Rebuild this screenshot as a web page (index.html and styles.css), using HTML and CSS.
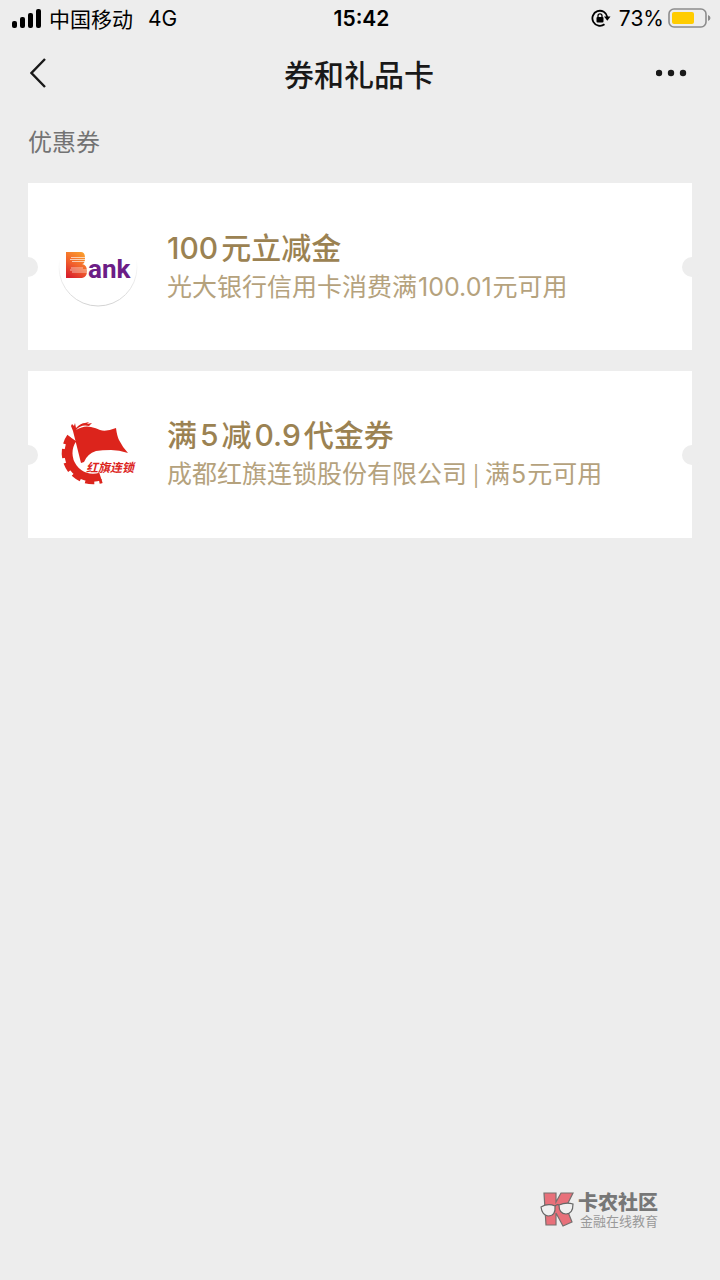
FILE: index.html
```
<!DOCTYPE html>
<html lang="zh-CN">
<head>
    <meta charset="UTF-8">
    <meta name="viewport" content="width=device-width, initial-scale=1.0">
    <title>券和礼品卡</title>
    <link rel="stylesheet" href="styles.css">
</head>
<body>

    <div class="status">
        <div class="status-left">
            <svg class="signal" width="30" height="20" viewBox="0 0 30 20">
                <rect x="0" y="13" width="5" height="7" rx="2"/>
                <rect x="8" y="9" width="5" height="11" rx="2"/>
                <rect x="16" y="5" width="5" height="15" rx="2"/>
                <rect x="24" y="1" width="5" height="19" rx="2"/>
            </svg>
            <span>中国移动</span>
            <span class="network">4G</span>
        </div>
        <div class="time">15:42</div>
        <div class="status-right">
            <svg width="20" height="20" viewBox="0 0 20 20">
                <path d="M13.5 16.2A7.5 7.5 0 1 1 16.3 9" fill="none" stroke="#000" stroke-width="1.8"/>
                <path d="M13 8.5h6.5L16.3 12.7z"/>
                <rect x="5.5" y="9" width="7" height="5.5" rx="1"/>
                <path d="M7 9.5V7.8a2 2 0 0 1 4 0v1.7" fill="none" stroke="#000" stroke-width="1.3"/>
            </svg>
            <span>73%</span>
            <svg width="43" height="20" viewBox="0 0 43 20">
                <rect x="1" y="1" width="37" height="18" rx="5" fill="none" stroke="#8c8c8c" stroke-width="1.6"/>
                <rect x="4" y="4" width="22" height="12" rx="2" fill="#fc0"/>
                <path d="M40 7q2.5 1 2.5 3T40 13z" fill="#8c8c8c"/>
            </svg>
        </div>
    </div>

    <header class="nav">
        <button class="nav-button" type="button" aria-label="返回">
            <svg width="18" height="30" viewBox="0 0 18 30">
                <path d="M15 1L1.5 15 15 29" fill="none" stroke="#191919" stroke-width="2.4"/>
            </svg>
        </button>
        <h1>券和礼品卡</h1>
        <button class="nav-button" type="button" aria-label="更多">
            <svg width="32" height="8" viewBox="0 0 32 8" fill="#191919">
                <circle cx="3" cy="4" r="3.2"/>
                <circle cx="15" cy="4" r="3.2"/>
                <circle cx="27" cy="4" r="3.2"/>
            </svg>
        </button>
    </header>

    <main>
        <h2>优惠券</h2>

        <a class="coupon" href="#">
            <svg class="logo" width="80" height="80" viewBox="0 0 80 80">
                <defs>
                    <linearGradient id="flame" x1="0.7" y1="0" x2="0.2" y2="1">
                        <stop offset="0" stop-color="#fa9b2c"/>
                        <stop offset="0.5" stop-color="#f2622c"/>
                        <stop offset="1" stop-color="#d8202c"/>
                    </linearGradient>
                    <linearGradient id="rim" x1="0" y1="0" x2="0" y2="1">
                        <stop offset="0.4" stop-color="#fff"/>
                        <stop offset="1" stop-color="#d2d2d2"/>
                    </linearGradient>
                </defs>
                <circle cx="40" cy="40" r="39" fill="#fff" stroke="url(#rim)"/>
                <path d="M8 25h15q4 0 4 6t-3 6q5 1 5 7t-5 7H8z" fill="url(#flame)"/>
                <path d="M13 30.5h15M12 32.5h15M14 34.5h13M13 41h12M12 43h17M14 45h15" stroke="#fff" stroke-width="0.9" opacity="0.7"/>
                <text class="bank" x="30" y="51">ank</text>
            </svg>
            <div class="info">
                <h3>100<span class="after-number">元立减金</span></h3>
                <p>光大银行信用卡消费满<span class="number">100.01</span>元可用</p>
            </div>
        </a>

        <a class="coupon" href="#">
            <svg class="logo" width="80" height="80" viewBox="0 0 80 80">
                <!-- gear: ring plus teeth -->
                <g fill="none" stroke="#dc241c">
                    <path d="M15 24A24.5 24.5 0 0 0 42.5 61.5" stroke-width="8"/>
                    <path d="M11 21A29.5 29.5 0 0 0 44 66" stroke-width="4" stroke-dasharray="9 5"/>
                </g>
                <g fill="#dc241c">
                    <path d="M14 9l2 2 1-3 1 5q5-5 9-5l4-1-2 2 5-1-3 3q-8-2-13 4 8-5 15-3 5 1 9 3 6 2 16-2 1 8 3 12 4 8 9 13-9-3-17-3-9 0-15 1-9 3-12 11l-3 1-8-32-2-5z"/>
                    <text class="hongqi" x="28" y="57">红旗连锁</text>
                </g>
            </svg>
            <div class="info">
                <h3>满<span class="number">5</span>减<span class="number">0.9</span>代金券</h3>
                <p>成都红旗连锁股份有限公司<span class="divider"> | </span>满<span class="number">5</span>元可用</p>
            </div>
        </a>
    </main>

    <footer class="community">
        <svg width="38" height="38" viewBox="0 0 38 38">
            <path d="M4 2h12v9l5-9h12l-7 14 6 15-9 4-7-13v12H6z" fill="#e8707a" stroke="#77706f" stroke-width="1.2"/>
            <g fill="#f0f0f0" stroke="#666" stroke-width="1.2">
                <path d="M1 16q7-4 14-1 1 10-7 10-6-1-7-9z"/>
                <path d="M19 14q7-3 14-1 0 10-7 10t-7-9z"/>
                <path d="M15 15q2-2 4-1" fill="none"/>
            </g>
        </svg>
        <div>
            <div class="community-name">卡农社区</div>
            <div class="community-slogan">金融在线教育</div>
        </div>
    </footer>

</body>
</html>
```

FILE: styles.css
```
* {
    box-sizing: border-box;
}

body {
    margin: 0;
    min-height: 100vh;
    display: flex;
    flex-direction: column;
    background-color: #ededed;
    color: #191919;
    font-family: Inter, "Noto Sans CJK SC", sans-serif;
}

h1, h2, h3, p {
    margin: 0;
}

.status {
    display: grid;
    grid-template-columns: 1fr auto 1fr;
    align-items: center;
    height: 36px;
    padding: 0 9px 0 12px;
    font-size: 21px;
    color: #000;
}

.status-left, .status-right {
    display: flex;
    align-items: center;
}

.status-left {
    gap: 7px;
}

.network {
    margin-left: 8px;
}

.status-right {
    justify-content: flex-end;
    gap: 8px;
}

.status-right span {
    margin-right: -4px;
}

.time {
    font-weight: 600;
}

.nav {
    display: flex;
    align-items: center;
    justify-content: space-between;
    height: 74px;
    padding: 0 32px 0 30px;
}

.nav-button {
    display: flex;
    width: 32px;
    padding: 0;
    border: 0;
    background: none;
}

h1 {
    font-size: 30px;
    font-weight: 500;
}

main {
    flex: 1;
    padding: 15px 28px;
}

h2 {
    margin-bottom: 22px;
    font-size: 24px;
    font-weight: 400;
    line-height: 36px;
    color: #737373;
}

.coupon {
    position: relative;
    display: flex;
    align-items: center;
    gap: 29px;
    min-height: 167px;
    margin-bottom: 21px;
    padding: 0 30px;
    background-color: #fff;
    color: #9b8252;
    text-decoration: none;
}

/* half-round cuts on both sides of the ticket */
.coupon::before, .coupon::after {
    content: "";
    position: absolute;
    top: 50%;
    width: 20px;
    height: 20px;
    margin-top: -10px;
    border-radius: 50%;
    background-color: #ededed;
}

.coupon::before {
    left: -10px;
}

.coupon::after {
    right: -10px;
}

h3 {
    font-size: 30px;
    font-weight: 500;
    line-height: 40px;
}

.coupon p {
    font-size: 25px;
    line-height: 38px;
    color: #b5a27d;
}

.number {
    margin: 0 3px;
}

.coupon p .number {
    margin: 0 1px;
}

.after-number {
    margin-left: 3px;
}

.divider {
    font-size: 20px;
}

.bank {
    font-family: Roboto, sans-serif;
    font-size: 26px;
    font-weight: 700;
    fill: #6c1d86;
}

.hongqi {
    font-family: "Noto Sans CJK SC", sans-serif;
    font-size: 12px;
    font-style: italic;
    font-weight: 700;
}

.community {
    display: flex;
    align-items: center;
    justify-content: flex-end;
    padding: 0 62px 51px 0;
    color: #777;
}

.community-name {
    font-size: 20px;
    font-weight: 900;
    line-height: 22px;
}

.community-slogan {
    padding-left: 2px;
    font-size: 13px;
    line-height: 14px;
    color: #999;
}
```
